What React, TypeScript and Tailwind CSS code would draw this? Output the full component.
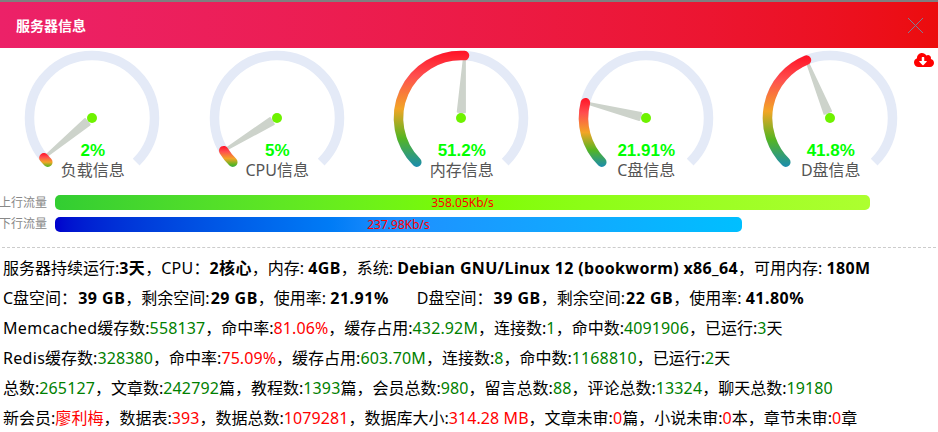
import { FaCloudDownloadAlt } from "react-icons/fa";

const gauges = [
  { value: 2, text: "2%", label: "负载信息" },
  { value: 5, text: "5%", label: "CPU信息" },
  { value: 51.2, text: "51.2%", label: "内存信息" },
  { value: 21.91, text: "21.91%", label: "C盘信息" },
  { value: 41.8, text: "41.8%", label: "D盘信息" },
];

const CX = 92;
const CY = 70;
const R = 62.5;

function point(deg: number) {
  const rad = (deg * Math.PI) / 180;
  return { x: CX + R * Math.cos(rad), y: CY - R * Math.sin(rad) };
}

function arc(from: number, to: number) {
  const a = point(from);
  const b = point(to);
  const large = from - to > 180 ? 1 : 0;
  return `M${a.x} ${a.y}A${R} ${R} 0 ${large} 1 ${b.x} ${b.y}`;
}

function Gauge({ value, text, label }: { value: number; text: string; label: string }) {
  const end = 225 - (value / 100) * 270;
  const id = `grad-${label}`;
  // gradient runs over the height of the filled part only
  let top = point(225).y;
  for (let d = 225; d >= end; d -= 1) top = Math.min(top, point(d).y);
  const bottom = point(225).y + (value < 10 ? 9 : 5);

  return (
    <div className="relative h-[142px] w-[184.5px]">
      <svg width="184.5" height="142" className="block">
        <defs>
          <linearGradient id={id} gradientUnits="userSpaceOnUse" x1="0" x2="0" y1={top - 5} y2={bottom}>
            <stop offset="0" stopColor="#ff1226" />
            <stop offset="0.22" stopColor="#ff4f4f" />
            <stop offset="0.5" stopColor="#f2a526" />
            <stop offset="0.75" stopColor="#55b522" />
            <stop offset="1" stopColor="#1a8cb0" />
          </linearGradient>
        </defs>
        <path d={arc(225, -45)} fill="none" stroke="#e4eaf7" strokeWidth="9.5" />
        <g transform={`rotate(${90 - end} ${CX} ${CY})`}>
          <path
            d={`M${CX - 3.6} ${CY - 6}L${CX - 0.6} ${CY - 58}L${CX + 0.6} ${CY - 58}L${CX + 3.6} ${CY - 6}Z`}
            fill="#cdd3cb"
            stroke="#cdd3cb"
            strokeWidth="2"
            strokeLinejoin="round"
          />
        </g>
        <path d={arc(225, end)} fill="none" stroke={`url(#${id})`} strokeWidth="9.5" strokeLinecap="round" />
        <circle cx={CX} cy={CY} r="5" fill="#6ef200" />
      </svg>
      <div className="absolute inset-x-0 top-[93px] pl-[1px] text-center">
        <div className="font-['Liberation_Sans',sans-serif] text-[17px] leading-[20px] font-bold text-[#00ff00]">{text}</div>
        <div className="-mt-px font-['Noto_Sans','Noto_Sans_CJK_SC',sans-serif] text-[16px] leading-[20px] text-[#555]">{label}</div>
      </div>
    </div>
  );
}

function Traffic({ label, text, width, bar }: { label: string; text: string; width: string; bar: string }) {
  return (
    <div className="flex h-[15px] items-center">
      <span className="-ml-px w-[56px] text-[12px] whitespace-nowrap text-[#888]">{label}</span>
      <div className={`h-[15px] rounded-[5px] text-center text-[12px] leading-[15px] text-[#ff0000] ${width} ${bar}`}>{text}</div>
    </div>
  );
}

const G = ({ children }: { children: React.ReactNode }) => <span className="tracking-[0.13px] text-[#008000]">{children}</span>;
const Red = ({ children }: { children: React.ReactNode }) => <span className="tracking-[0.08px] text-[#ff0000]">{children}</span>;
const B = ({ children }: { children: React.ReactNode }) => <b className="font-bold tracking-[0.35px]">{children}</b>;
// disk sizes sit a touch further from the colon and run wider
const W = ({ children }: { children: React.ReactNode }) => <b className="ml-px font-bold tracking-[0.5px]">{children}</b>;
const L = ({ children }: { children: React.ReactNode }) => <span className="tracking-[0.3px]">{children}</span>;

export default function App() {
  return (
    <div className="h-[432px] w-[938px] overflow-hidden bg-white font-['Noto_Sans','Noto_Sans_CJK_SC',sans-serif] text-black">
      {/* Header */}
      <div className="flex h-[48px] items-center justify-between border-t-2 border-[#7f7f7f] bg-gradient-to-r from-[#ec2168] to-[#ec0c0c] pr-[15px] pl-4">
        <span className="text-[14px] font-bold text-white">服务器信息</span>
        <svg width="15" height="15" viewBox="0 0 15 15">
          <path d="M0 0L15 15M15 0L0 15" stroke="#7d7f96" strokeWidth="1" fill="none" />
        </svg>
      </div>

      {/* Gauges */}
      <div className="relative flex h-[142px]">
        {gauges.map((g) => (
          <Gauge key={g.label} {...g} />
        ))}
        <FaCloudDownloadAlt className="absolute top-[2px] right-[4px] text-[20px] text-[#ff0000]" />
      </div>

      {/* Traffic bars */}
      <div className="mt-[5px] flex flex-col gap-[6.5px]">
        <Traffic
          label="上行流量"
          text="358.05Kb/s"
          width="w-[815px]"
          bar="bg-gradient-to-r from-[#32cd32] via-[#7cfc00] to-[#adff2f]"
        />
        <Traffic
          label="下行流量"
          text="237.98Kb/s"
          width="w-[687px]"
          bar="bg-gradient-to-r from-[#0000cd] via-[#1e90ff] to-[#00bfff]"
        />
      </div>

      <div className="mx-[2px] mt-[15px] border-t border-dashed border-[#ccc]" />

      {/* Stats */}
      <div className="mt-[5px] pl-[3px] text-[16px] leading-[30px] whitespace-nowrap">
        <div>
          服务器持续运行:<B>3天</B>，<L>CPU</L>：<B>2核心</B>，内存: <B>4GB</B>，系统: <B>Debian GNU/Linux 12 (bookworm) x86_64</B>，可用内存: <B>180M</B>
        </div>
        <div>
          C盘空间：<W>39 GB</W>，剩余空间:<W>29 GB</W>，使用率: <b className="font-bold tracking-[0.5px]">21.91%</b>
          <span className="inline-block w-[28px]" />
          D盘空间：<W>39 GB</W>，剩余空间:<W>22 GB</W>，使用率: <b className="font-bold tracking-[0.5px]">41.80%</b>
        </div>
        <div>
          <L>Memcached</L>缓存数:<G>558137</G>，命中率:<Red>81.06%</Red>，缓存占用:<G>432.92M</G>，连接数:<G>1</G>，命中数:<G>4091906</G>，已运行:<G>3</G>天
        </div>
        <div>
          <L>Redis</L>缓存数:<G>328380</G>，命中率:<Red>75.09%</Red>，缓存占用:<G>603.70M</G>，连接数:<G>8</G>，命中数:<G>1168810</G>，已运行:<G>2</G>天
        </div>
        <div>
          总数:<G>265127</G>，文章数:<G>242792</G>篇，教程数:<G>1393</G>篇，会员总数:<G>980</G>，留言总数:<G>88</G>，评论总数:<G>13324</G>，聊天总数:<G>19180</G>
        </div>
        <div>
          新会员:<Red>廖利梅</Red>，数据表:<Red>393</Red>，数据总数:<Red>1079281</Red>，数据库大小:<Red>314.28 MB</Red>，文章未审:<Red>0</Red>篇，小说未审:<Red>0</Red>本，章节未审:<Red>0</Red>章
        </div>
      </div>
    </div>
  );
}
